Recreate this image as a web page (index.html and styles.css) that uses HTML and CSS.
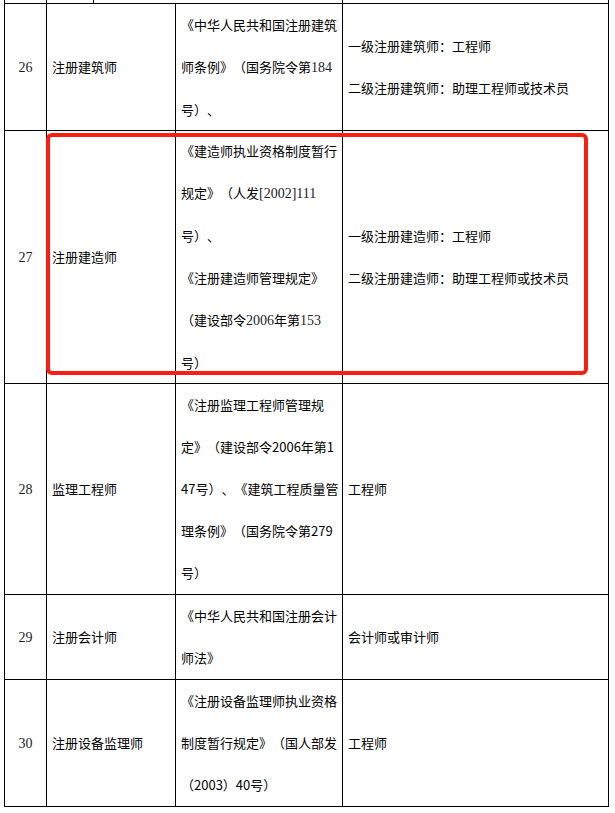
FILE: index.html
```html
<!DOCTYPE html>
<html lang="zh-CN">
<head>
<meta charset="utf-8">
<title>注册执业资格</title>
<link rel="stylesheet" href="styles.css">
</head>
<body>
<div class="page">
  <div class="strip">
    <div class="s s1"></div>
    <div class="s s2"></div>
    <div class="s s3"></div>
    <div class="s s4"></div>
  </div>
  <div class="grid">
    <div class="c num l3"><div class="t"><span class="tnr">26</span></div></div>
    <div class="c l3"><div class="t">注册建筑师</div></div>
    <div class="c l3"><div class="t">《中华人民共和国注册建筑<br>师条例》（国务院令第<span class="tnr">184</span><br>号）、</div></div>
    <div class="c l3"><div class="t">一级注册建筑师：工程师<br>二级注册建筑师：助理工程师或技术员</div></div>

    <div class="c num l6"><div class="t"><span class="tnr">27</span></div></div>
    <div class="c l6"><div class="t">注册建造师</div></div>
    <div class="c l6"><div class="t">《建造师执业资格制度暂行<br>规定》（人发<span class="tnr">[2002]111</span><br>号）、<br>《注册建造师管理规定》<br>（建设部令<span class="tnr">2006</span>年第<span class="tnr">153</span><br>号）</div></div>
    <div class="c l6"><div class="t">一级注册建造师：工程师<br>二级注册建造师：助理工程师或技术员</div></div>

    <div class="c num l5"><div class="t"><span class="tnr">28</span></div></div>
    <div class="c l5"><div class="t">监理工程师</div></div>
    <div class="c l5"><div class="t">《注册监理工程师管理规<br>定》（建设部令2006年第1<br>47号）、《建筑工程质量管<br>理条例》（国务院令第279<br>号）</div></div>
    <div class="c l5"><div class="t">工程师</div></div>

    <div class="c num l2"><div class="t"><span class="tnr">29</span></div></div>
    <div class="c l2"><div class="t">注册会计师</div></div>
    <div class="c l2"><div class="t">《中华人民共和国注册会计<br>师法》</div></div>
    <div class="c l2"><div class="t">会计师或审计师</div></div>

    <div class="c num l3"><div class="t"><span class="tnr">30</span></div></div>
    <div class="c l3"><div class="t">注册设备监理师</div></div>
    <div class="c l3"><div class="t">《注册设备监理师执业资格<br>制度暂行规定》（国人部发<br>（2003）40号）</div></div>
    <div class="c l3"><div class="t">工程师</div></div>
  </div>
  <div class="highlight"></div>
</div>
</body>
</html>
```

FILE: styles.css
```css
html, body {
  margin: 0;
  padding: 0;
  background: #ffffff;
}

.page {
  position: relative;
  width: 615px;
  height: 813px;
  font-family: "Noto Sans CJK SC", "Noto Sans", sans-serif;
  font-size: 13px;
  color: #000000;
  text-spacing-trim: space-all;
  font-feature-settings: "halt" 0, "chws" 0;
}

.strip {
  display: flex;
  height: 3px;
  margin-left: 4px;
}

.s {
  box-sizing: border-box;
  height: 3px;
  border-left: 1px solid #000;
}

.s1 { width: 42px; }
.s2 { width: 47px; }
.s3 { width: 249px; }
.s4 { width: 267px; border-right: 1px solid #000; }

.grid {
  display: grid;
  grid-template-columns: 42px 129px 167px 266px;
  margin-left: 4px;
  width: 604px;
  border-left: 1px solid #000;
  border-top: 1px solid #000;
}

.c {
  box-sizing: border-box;
  border-right: 1px solid #000;
  border-bottom: 1px solid #000;
  padding-left: 5px;
  display: flex;
  align-items: center;
}

.t {
  line-height: 42px;
  white-space: nowrap;
}

.l2 { height: 85px; }
.l3 { height: 127px; }
.l5 { height: 211px; }
.l6 { height: 253px; }

.num {
  justify-content: center;
  padding-left: 0;
}

.tnr {
  font-family: "Liberation Serif", serif;
  font-size: 14px;
  color: #1c1c2a;
}

.highlight {
  position: absolute;
  left: 46px;
  top: 133px;
  width: 542px;
  height: 242px;
  box-sizing: border-box;
  border: 4px solid #fb1c12;
  border-radius: 6px;
}
```
